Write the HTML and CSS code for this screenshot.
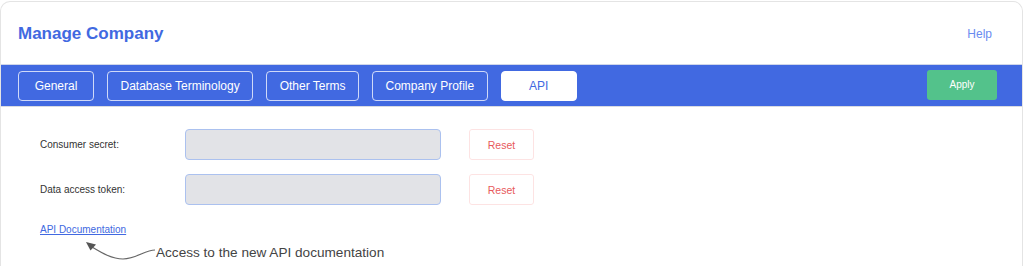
FILE: index.html
```html
<!DOCTYPE html>
<html>
<head>
<meta charset="utf-8">
<link rel="stylesheet" href="styles.css">
</head>
<body>
<div class="card">
  <header class="header">
    <h1 class="title">Manage Company</h1>
    <a class="help" href="#">Help</a>
  </header>
  <nav class="bar">
    <div class="tabs">
      <button class="tab">General</button>
      <button class="tab">Database Terminology</button>
      <button class="tab">Other Terms</button>
      <button class="tab">Company Profile</button>
      <button class="tab active">API</button>
    </div>
    <button class="apply">Apply</button>
  </nav>
  <section class="content">
    <div class="row">
      <label class="label">Consumer secret:</label>
      <div class="input"></div>
      <button class="reset">Reset</button>
    </div>
    <div class="row">
      <label class="label">Data access token:</label>
      <div class="input"></div>
      <button class="reset">Reset</button>
    </div>
    <a class="doclink" href="#">API Documentation</a>
    <div class="note">
      <svg class="arrow" width="80" height="24" viewBox="0 0 80 24">
        <path d="M74 9 C64 9 55 18 42 18 C31 18 21 12 11 6" fill="none" stroke="#666" stroke-width="1.2"/>
        <path d="M5 1 L15 3.5 L9.5 9.5 Z" fill="#555"/>
      </svg>
      <span class="note-text">Access to the new API documentation</span>
    </div>
  </section>
</div>
</body>
</html>
```
FILE: styles.css
```css
* { box-sizing: border-box; }
html, body { margin: 0; padding: 0; background: #fff; }
body {
  padding-top: 1px;
  font-family: "Liberation Sans", Arial, sans-serif;
}
.card {
  width: 1023px;
  height: 265px;
  border: 1px solid #e4e4e4;
  border-bottom: none;
  border-radius: 10px 10px 0 0;
  display: flex;
  flex-direction: column;
  overflow: hidden;
}
.header {
  height: 62px;
  display: flex;
  align-items: center;
  justify-content: space-between;
  padding: 2px 30px 0 17px;
}
.title {
  margin: 0;
  font-size: 17px;
  font-weight: bold;
  color: #4169e1;
}
.help {
  font-size: 12px;
  color: #6a8cf0;
  text-decoration: none;
}
.bar {
  height: 43px;
  background: #4169e1;
  border-top: 1px solid #cfd6ea;
  border-bottom: 1px solid #d8dbe2;
  display: flex;
  align-items: center;
  justify-content: space-between;
  padding: 0 25px 0 17px;
}
.tabs { display: flex; gap: 13px; }
.tab {
  height: 30px;
  min-width: 76px;
  padding: 0 12.5px;
  border: 1px solid rgba(255,255,255,0.75);
  border-radius: 4px;
  background: transparent;
  color: #fff;
  font-family: inherit;
  font-size: 12px;
}
.tab.active {
  background: #fff;
  color: #4169e1;
  border-color: #fff;
}
.apply {
  width: 70px;
  height: 30px;
  margin-top: -2px;
  border: none;
  border-radius: 3px;
  background: #53c28b;
  color: #fff;
  font-family: inherit;
  font-size: 10px;
}
.content {
  padding: 22px 0 0 39px;
  display: flex;
  flex-direction: column;
}
.row {
  display: flex;
  align-items: center;
  height: 31px;
  margin-bottom: 14px;
}
.label {
  width: 145px;
  font-size: 10px;
  color: #333;
}
.input {
  width: 256px;
  height: 31px;
  background: #e2e3e7;
  border: 1px solid #abc1ef;
  border-radius: 4px;
  margin-right: 28px;
}
.reset {
  width: 65px;
  height: 31px;
  background: #fff;
  border: 1px solid #fde3e3;
  border-radius: 3px;
  color: #e8595c;
  font-family: inherit;
  font-size: 10.5px;
}
.doclink {
  align-self: flex-start;
  margin-top: 5px;
  font-size: 10px;
  color: #4169e1;
  text-decoration: underline;
}
.note {
  display: flex;
  align-items: flex-start;
  margin-left: 41px;
  margin-top: 6px;
}
.arrow { flex: none; }
.note-text {
  margin-left: -5px;
  margin-top: 4px;
  font-size: 13.6px;
  color: #444;
}
```
